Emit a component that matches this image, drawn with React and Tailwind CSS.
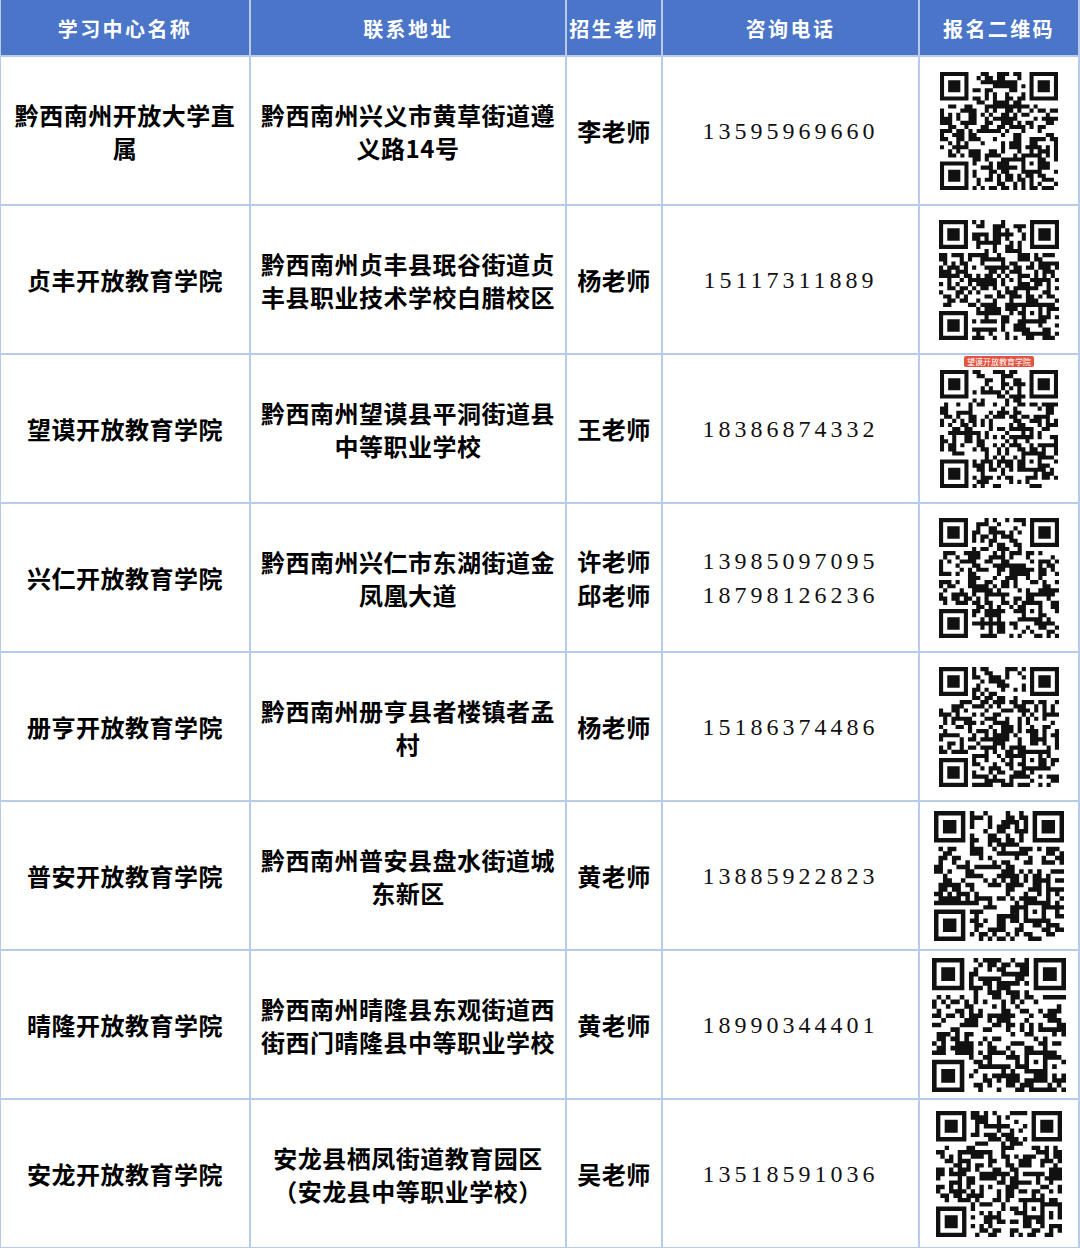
const rows = [
    {
        name: '黔西南州开放大学直属',
        addr: ['黔西南州兴义市黄草街道遵义路14号'],
        teachers: ['李老师'],
        phones: ['13595969660'],
        seed: 11,
        qr: 118
    },
    {
        name: '贞丰开放教育学院',
        addr: ['黔西南州贞丰县珉谷街道贞丰县职业技术学校白腊校区'],
        teachers: ['杨老师'],
        phones: ['15117311889'],
        seed: 27,
        qr: 120
    },
    {
        name: '望谟开放教育学院',
        addr: ['黔西南州望谟县平洞街道县中等职业学校'],
        teachers: ['王老师'],
        phones: ['18386874332'],
        seed: 43,
        qr: 118,
        badge: '望谟开放教育学院'
    },
    {
        name: '兴仁开放教育学院',
        addr: ['黔西南州兴仁市东湖街道金凤凰大道'],
        teachers: ['许老师', '邱老师'],
        phones: ['13985097095', '18798126236'],
        seed: 59,
        qr: 120
    },
    {
        name: '册亨开放教育学院',
        addr: ['黔西南州册亨县者楼镇者孟村'],
        teachers: ['杨老师'],
        phones: ['15186374486'],
        seed: 71,
        qr: 120
    },
    {
        name: '普安开放教育学院',
        addr: ['黔西南州普安县盘水街道城东新区'],
        teachers: ['黄老师'],
        phones: ['13885922823'],
        seed: 83,
        qr: 130
    },
    {
        name: '晴隆开放教育学院',
        addr: ['黔西南州晴隆县东观街道西街西门晴隆县中等职业学校'],
        teachers: ['黄老师'],
        phones: ['18990344401'],
        seed: 97,
        qr: 134
    },
    {
        name: '安龙开放教育学院',
        addr: ['安龙县栖凤街道教育园区', '（安龙县中等职业学校）'],
        teachers: ['吴老师'],
        phones: ['13518591036'],
        seed: 113,
        qr: 126
    }
];

const headers = ['学习中心名称', '联系地址', '招生老师', '咨询电话', '报名二维码'];

// small deterministic generator so every QR looks different but stays fixed
const makeRandom = (seed) => {
    let s = seed * 9301 + 49297;
    return () => {
        s = (s * 1103515245 + 12345) % 2147483648;
        return s / 2147483648;
    };
};

const QrCode = ({ seed, size }) => {
    const n = 29;
    const rand = makeRandom(seed);
    const cells = [];
    const inFinder = (x, y) =>
        (x < 8 && y < 8) || (x > n - 9 && y < 8) || (x < 8 && y > n - 9);
    for (let y = 0; y < n; y++) {
        for (let x = 0; x < n; x++) {
            if (inFinder(x, y)) continue;
            if (x >= 20 && x <= 24 && y >= 20 && y <= 24) continue;
            if (rand() < 0.5) cells.push(`M${x} ${y}h1v1h-1z`);
        }
    }
    const finder = (ox, oy) =>
        `M${ox} ${oy}h7v7h-7zM${ox + 1} ${oy + 1}v5h5v-5zM${ox + 2} ${oy + 2}h3v3h-3z`;
    const d =
        finder(0, 0) +
        finder(n - 7, 0) +
        finder(0, n - 7) +
        'M20 20h5v5h-5zM21 21v3h3v-3zM22 22h1v1h-1z' +
        cells.join('');
    return (
        <svg width={size} height={size} viewBox={`0 0 ${n} ${n}`}>
            <path d={d} fill="#111" fillRule="evenodd" />
        </svg>
    );
};

const Cell = ({ children, className = '' }) => (
    <div className={`bg-white flex flex-col items-center justify-center text-center text-black font-semibold text-[24px] leading-[33px] tracking-[0.5px] ${className}`}>
        {children}
    </div>
);

export default function App() {
    return (
        <div
            className="w-[1080px] h-[1248px] bg-white"
            style={{ fontFamily: '"Noto Sans CJK SC", "Noto Sans", sans-serif' }}
        >
            <div className="grid grid-cols-[248px_314px_94px_255px_158px] grid-rows-[55px_repeat(8,147px)] gap-[2px] pl-[1px] pr-[2px] pb-[1px] bg-[#b8cbea] w-[1080px]">
                {headers.map((h) => (
                    <div
                        key={h}
                        className="bg-[#4a75c9] text-white font-bold text-[20px] tracking-[2.4px] pt-[3px] flex items-center justify-center"
                    >
                        {h}
                    </div>
                ))}
                {rows.map((r) => (
                    <div key={r.name} className="contents">
                        <Cell className="px-2">{r.name}</Cell>
                        <Cell className="px-2">
                            {r.addr.map((a) => (
                                <span key={a}>{a}</span>
                            ))}
                        </Cell>
                        <Cell className="leading-[34px]">
                            {r.teachers.map((t, i) => (
                                <span key={i}>{t}</span>
                            ))}
                        </Cell>
                        <Cell className="leading-[34px]">
                            {r.phones.map((p) => (
                                <span
                                    key={p}
                                    className="font-normal tracking-[4px] text-[24px] text-[#111]"
                                    style={{ fontFamily: '"Liberation Serif", serif' }}
                                >
                                    {p}
                                </span>
                            ))}
                        </Cell>
                        <div className="bg-white flex items-center justify-center relative">
                            {r.badge && (
                                <div className="absolute top-[1px] left-1/2 -translate-x-1/2 bg-[#e2543f] text-white text-[8px] leading-[11px] px-[3px] rounded-[2px] whitespace-nowrap">
                                    {r.badge}
                                </div>
                            )}
                            <QrCode seed={r.seed} size={r.qr} />
                        </div>
                    </div>
                ))}
            </div>
        </div>
    );
}
